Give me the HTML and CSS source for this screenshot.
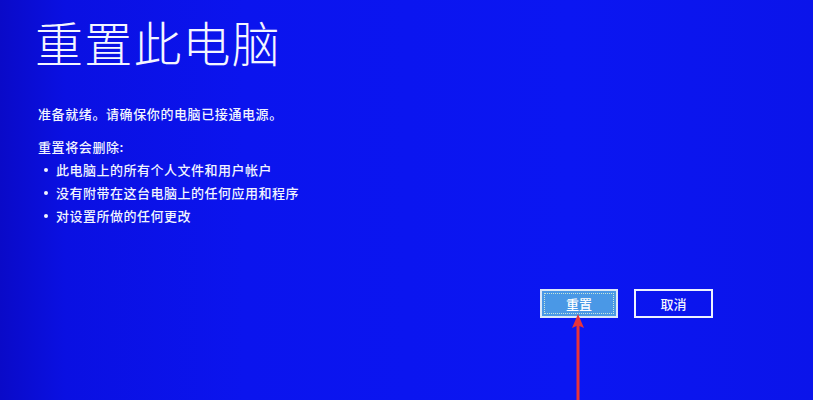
FILE: index.html
```html
<!DOCTYPE html>
<html lang="zh-CN">
<head>
<meta charset="utf-8">
<title>重置此电脑</title>
<link rel="stylesheet" href="styles.css">
</head>
<body>
<div class="screen">
  <h1 class="title">重置此电脑</h1>
  <p class="ready">准备就绪。请确保你的电脑已接通电源。</p>
  <p class="will">重置将会删除:</p>
  <ul class="list">
    <li>此电脑上的所有个人文件和用户帐户</li>
    <li>没有附带在这台电脑上的任何应用和程序</li>
    <li>对设置所做的任何更改</li>
  </ul>
  <div class="actions">
    <button class="btn btn-primary"><span class="focus">重置</span></button>
    <button class="btn">取消</button>
  </div>
  <svg class="arrow" width="16" height="90" viewBox="0 0 16 90">
    <path d="M8 0 L14 14 L9.5 12 L9.5 90 L6.5 90 L6.5 12 L2 14 Z" fill="#e8343a"/>
  </svg>
</div>
</body>
</html>
```
FILE: styles.css
```css
html, body {
  margin: 0;
  padding: 0;
}
body {
  width: 813px;
  height: 400px;
  overflow: hidden;
  background: linear-gradient(90deg, #0a0ac8 0%, #0a10e2 8%, #0b14ee 30%, #0b16f2 70%, #0b14ea 100%);
  font-family: "Noto Sans CJK SC", "Noto Sans", sans-serif;
  color: #f2f5ff;
}
.screen {
  position: relative;
  height: 400px;
  padding-left: 37px;
  box-sizing: border-box;
}
.title {
  margin: 0 0 0 -2px;
  padding-top: 17px;
  font-size: 48px;
  line-height: 48px;
  font-weight: 300;
  letter-spacing: 1.2px;
  color: #f4f6ff;
}
.ready, .will {
  margin: 0;
  font-size: 13px;
  line-height: 23px;
  letter-spacing: 0.6px;
  font-weight: 500;
  padding-left: 1px;
}
.ready {
  margin-top: 37px;
}
.will {
  margin-top: 10px;
}
.list {
  margin: 0;
  padding: 0 0 0 2px;
  list-style: none;
  font-size: 13px;
  line-height: 23px;
  letter-spacing: 0.5px;
  font-weight: 500;
}
.list li {
  display: flex;
  align-items: center;
}
.list li::before {
  content: "";
  width: 4px;
  height: 4px;
  border-radius: 50%;
  background: #f2f5ff;
  margin-left: 5px;
  margin-right: 8px;
}
.actions {
  display: flex;
  justify-content: flex-end;
  gap: 16px;
  margin-top: 62px;
  padding-right: 100px;
}
.btn {
  width: 79px;
  height: 29px;
  border: 2px solid #eef2ff;
  background: transparent;
  color: #f4f6ff;
  font-family: "Noto Sans CJK SC", "Noto Sans", sans-serif;
  font-size: 13px;
  font-weight: 500;
  padding: 0;
  display: flex;
  align-items: center;
  justify-content: center;
}
.btn-primary {
  width: 78px;
  background: #4a98e6;
  border-color: #dce8f8;
  padding: 2px;
}
.btn-primary .focus {
  flex: 1;
  align-self: stretch;
  display: flex;
  align-items: center;
  justify-content: center;
  border: 1px dotted #c8e6d8;
  color: #ffffff;
}
.arrow {
  position: absolute;
  left: 570px;
  top: 314px;
}
```
